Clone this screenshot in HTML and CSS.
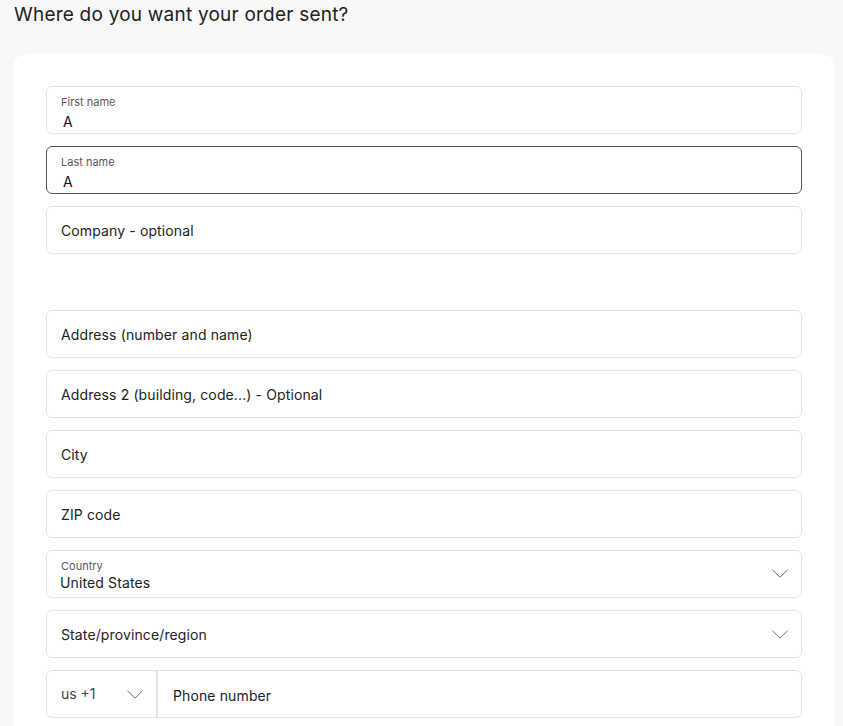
FILE: index.html
```html
<!DOCTYPE html>
<html>
<head>
  <meta charset="UTF-8">
  <title>Shipping address</title>
  <link rel="stylesheet" href="styles.css">
</head>
<body>

  <div class="page">
    <h1 class="page-title">Where do you want your order sent?</h1>

    <div class="card">
      <div class="field field-filled">
        <div class="field-label">First name</div>
        <div class="field-value">A</div>
      </div>
      <div class="field field-filled field-focus">
        <div class="field-label">Last name</div>
        <div class="field-value">A</div>
      </div>
      <div class="field">
        <span class="field-placeholder">Company - optional</span>
      </div>

      <div class="spacer"></div>

      <div class="field">
        <span class="field-placeholder">Address (number and name)</span>
      </div>
      <div class="field">
        <span class="field-placeholder">Address 2 (building, code...) - Optional</span>
      </div>
      <div class="field">
        <span class="field-placeholder">City</span>
      </div>
      <div class="field">
        <span class="field-placeholder">ZIP code</span>
      </div>

      <!-- select boxes -->
      <div class="field field-select field-filled">
        <div class="select-text">
          <div class="field-label">Country</div>
          <div class="select-value">United States</div>
        </div>
        <svg class="chevron" width="16" height="9" viewBox="0 0 16 9"><path d="M0.5 0.8 L8 8.2 L15.5 0.8" fill="none" stroke="#6b6b6b" stroke-width="1"/></svg>
      </div>
      <div class="field field-select">
        <span class="field-placeholder">State/province/region</span>
        <svg class="chevron" width="16" height="9" viewBox="0 0 16 9"><path d="M0.5 0.8 L8 8.2 L15.5 0.8" fill="none" stroke="#6b6b6b" stroke-width="1"/></svg>
      </div>

      <div class="phone-row">
        <div class="phone-code">
          <span class="code-text">us +1</span>
          <svg class="chevron" width="16" height="9" viewBox="0 0 16 9"><path d="M0.5 0.8 L8 8.2 L15.5 0.8" fill="none" stroke="#6b6b6b" stroke-width="1"/></svg>
        </div>
        <div class="phone-number">
          <span class="field-placeholder">Phone number</span>
        </div>
      </div>
    </div>
  </div>

</body>
</html>
```

FILE: styles.css
```css
body {
  margin: 0;
  padding: 0;
  background-color: #f8f8f8;
  color: #222222;
  font-family: Inter, "Noto Sans", sans-serif;
}
.page {
  padding: 3px 9px 0 14px;
}
.page-title {
  margin: 0 0 27px 0;
  font-size: 19px;
  line-height: 24px;
  font-weight: 400;
  letter-spacing: 0.22px;
  color: #222222;
}
/* white card holding the form */
.card {
  background-color: #ffffff;
  border-radius: 12px;
  padding: 32px 32px 40px 32px;
  display: flex;
  flex-direction: column;
  gap: 12px;
}
.spacer {
  height: 32px;
}
.field {
  box-sizing: border-box;
  height: 48px;
  border: 1px solid #e3e3e3;
  border-radius: 6px;
  padding: 2px 14px 0 14px;
  display: flex;
  align-items: center;
}
.field-filled {
  flex-direction: column;
  align-items: flex-start;
  justify-content: flex-start;
  padding-top: 9px;
}
.field-focus {
  border-color: #555555;
}
.field-label {
  font-size: 11px;
  line-height: 13px;
  color: #595959;
  margin-bottom: 4px;
}
.field-value {
  font-size: 14px;
  line-height: 18px;
  color: #111111;
  padding-left: 2px;
}
.field-placeholder {
  font-size: 14px;
  line-height: 18px;
  letter-spacing: 0.12px;
  color: #222222;
}
/* dropdowns */
.field-select {
  flex-direction: row;
  align-items: center;
  justify-content: space-between;
  padding-right: 13px;
}
.field-select .chevron {
  margin-top: -2px;
}
.field-select.field-filled {
  padding-top: 0;
}
.select-text {
  display: flex;
  flex-direction: column;
  padding-top: 4px;
}
.select-text .field-label {
  margin-bottom: 1px;
}
.select-value {
  font-size: 14px;
  line-height: 18px;
  letter-spacing: 0.12px;
  color: #222222;
  margin-left: -1px;
}
.chevron {
  display: block;
  flex-shrink: 0;
}
/* phone */
.phone-row {
  display: flex;
  height: 48px;
}
.phone-code {
  box-sizing: border-box;
  width: 112px;
  border: 1px solid #e3e3e3;
  border-right: 2px solid #e3e3e3;
  border-radius: 6px 0 0 6px;
  padding: 0 13px 0 14px;
  display: flex;
  align-items: center;
  justify-content: space-between;
}
.code-text {
  font-size: 14px;
  color: #444444;
  margin-top: -2px;
}
.phone-number {
  flex: 1;
  box-sizing: border-box;
  border: 1px solid #e3e3e3;
  border-left: none;
  border-radius: 0 6px 6px 0;
  padding: 3px 14px 0 15px;
  display: flex;
  align-items: center;
}
```
